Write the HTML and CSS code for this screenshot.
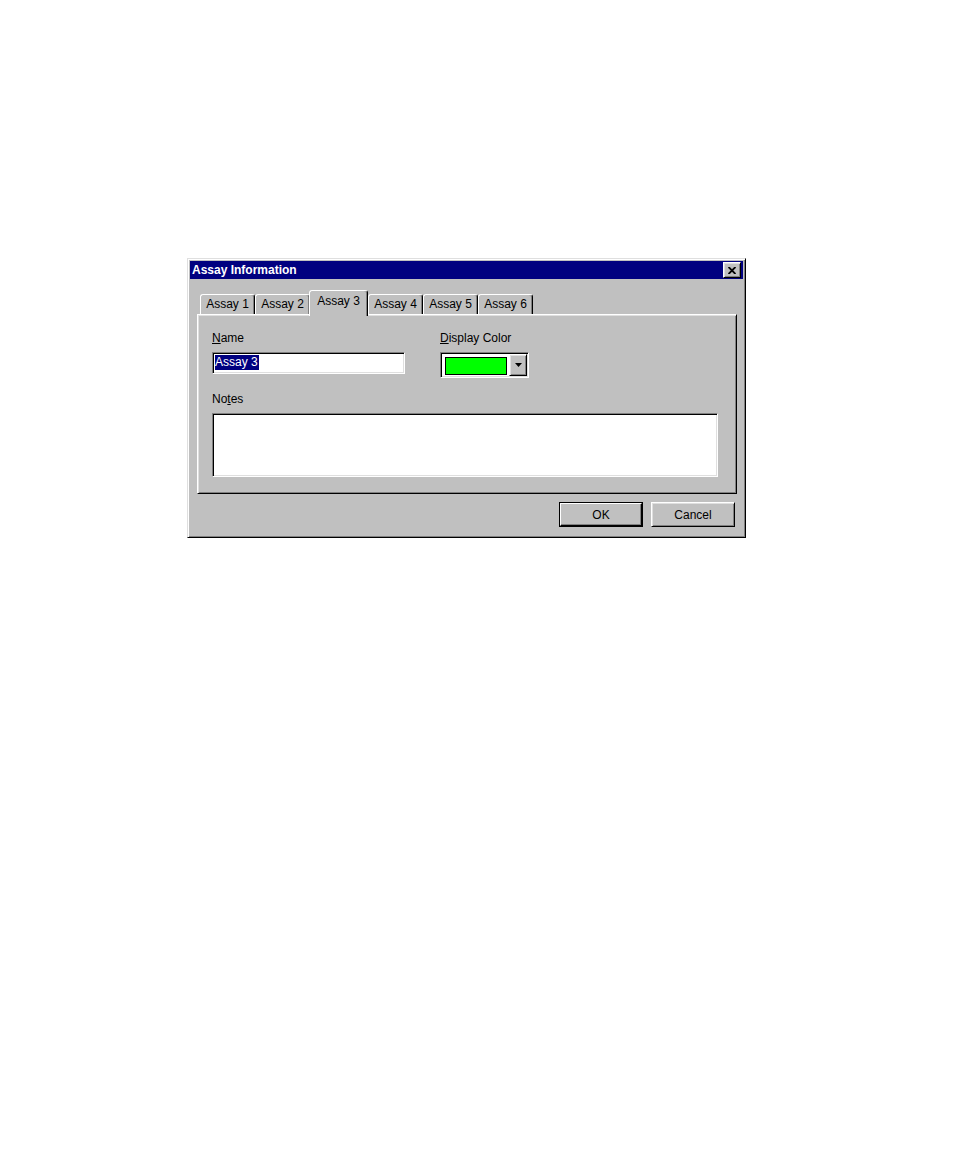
FILE: index.html
```html
<!DOCTYPE html>
<html>
<head>
<meta charset="utf-8">
<title>Assay Information</title>
<link rel="stylesheet" href="styles.css">
</head>
<body>
<div class="window">
  <div class="titlebar">
    <span class="title">Assay Information</span>
    <div class="close raised">
      <svg width="8" height="7" viewBox="0 0 8 7"><path d="M0.5 0 L7.5 7 M7.5 0 L0.5 7" stroke="#000" stroke-width="1.9" fill="none"/></svg>
    </div>
  </div>
  <div class="tabs-area">
    <div class="tabstrip">
      <div class="tab">Assay 1</div>
      <div class="tab">Assay 2</div>
      <div class="tab selected">Assay 3</div>
      <div class="tab">Assay 4</div>
      <div class="tab">Assay 5</div>
      <div class="tab">Assay 6</div>
    </div>
    <div class="panel">
      <div class="grid">
        <div class="label"><u>N</u>ame</div>
        <div class="label"><u>D</u>isplay Color</div>
        <div class="field sunken"><span class="sel">Assay 3</span></div>
        <div class="combo sunken">
          <div class="swatch"></div>
          <div class="drop raised">
            <svg width="7" height="4" viewBox="0 0 7 4"><path d="M0 0 H7 L3.5 4 Z" fill="#000"/></svg>
          </div>
        </div>
      </div>
      <div class="label notes-label">No<u>t</u>es</div>
      <div class="notes sunken"></div>
    </div>
  </div>
  <div class="buttons">
    <div class="btn default"><div class="btn-inner">OK</div></div>
    <div class="btn raised">Cancel</div>
  </div>
</div>
</body>
</html>
```
FILE: styles.css
```css
* { box-sizing: border-box; }
body {
  margin: 0;
  background: #fff;
  font-family: "Liberation Sans", Arial, sans-serif;
  font-size: 12px;
  line-height: 14px;
  color: #000;
}
u { text-decoration: underline; text-underline-offset: 1px; }

.raised {
  border: 1px solid;
  border-color: #fff #000 #000 #fff;
  box-shadow: inset 1px 1px #dfdfdf, inset -1px -1px #808080;
  background: #c0c0c0;
}
.sunken {
  border: 1px solid;
  border-color: #808080 #fff #fff #808080;
  box-shadow: inset 1px 1px #000, inset -1px -1px #dfdfdf;
  background: #fff;
}

.window {
  margin: 258px 0 0 187px;
  width: 559px;
  height: 280px;
  background: #c0c0c0;
  border: 1px solid;
  border-color: #dfdfdf #000 #000 #dfdfdf;
  box-shadow: inset 1px 1px #fff, inset -1px -1px #808080;
  padding: 2px;
  display: flex;
  flex-direction: column;
}

.titlebar {
  height: 18px;
  background: #000080;
  color: #fff;
  display: flex;
  align-items: center;
  justify-content: space-between;
  padding: 0 2px 0 2px;
}
.title { font-weight: bold; font-size: 12px; }
.close {
  width: 18px;
  height: 16px;
  display: flex;
  align-items: center;
  justify-content: center;
}
.close svg { display: block; }

.tabs-area {
  margin: 11px 6px 0 7px;
  display: flex;
  flex-direction: column;
}
.tabstrip {
  height: 24px;
  display: flex;
  align-items: flex-end;
  padding-left: 3px;
}
.tab {
  height: 20px;
  width: 55px;
  padding-top: 2px;
  text-align: center;
  background: #c0c0c0;
  border: 1px solid;
  border-bottom: none;
  border-color: #fff #000 transparent #fff;
  box-shadow: inset -1px 0 #808080;
  border-radius: 3px 3px 0 0;
  white-space: nowrap;
}
.tab.selected {
  position: relative;
  z-index: 1;
  height: 26px;
  width: 59px;
  margin: 0 0 -2px -1px;
  padding-top: 3px;
}

.panel {
  height: 180px;
  border: 1px solid;
  border-color: #fff #000 #000 #fff;
  box-shadow: inset 1px 1px #dfdfdf, inset -1px -1px #808080;
  padding: 16px 0 0 14px;
}
.grid {
  display: grid;
  grid-template-columns: 228px 89px;
  grid-template-rows: 14px 26px;
  row-gap: 7px;
  align-items: start;
}
.field {
  width: 193px;
  height: 22px;
  padding: 2px 0 0 2px;
  line-height: 15px;
}
.sel {
  display: inline-block;
  background: #000080;
  color: #fff;
  padding: 0 1px 0 0;
}
.combo {
  width: 89px;
  height: 26px;
  display: flex;
  padding: 1px;
}
.swatch {
  width: 62px;
  height: 18px;
  margin: 3px 0 0 3px;
  background: #00ff00;
  border: 1px solid #000;
}
.drop {
  margin-left: auto;
  width: 18px;
  height: 22px;
  display: flex;
  align-items: center;
  justify-content: center;
}
.drop svg { display: block; }
.notes-label { margin-top: 14px; }
.notes {
  margin-top: 7px;
  width: 506px;
  height: 64px;
}

.buttons {
  margin: 8px 8px 0 0;
  display: flex;
  justify-content: flex-end;
  gap: 8px;
}
.btn {
  width: 84px;
  height: 25px;
  display: flex;
  align-items: center;
  justify-content: center;
}
.btn.default {
  border: 1px solid #000;
  padding: 0;
}
.btn-inner {
  width: 100%;
  height: 100%;
  display: flex;
  align-items: center;
  justify-content: center;
  border: 1px solid;
  border-color: #fff #000 #000 #fff;
  box-shadow: inset -1px -1px #808080;
  background: #c0c0c0;
}
```
